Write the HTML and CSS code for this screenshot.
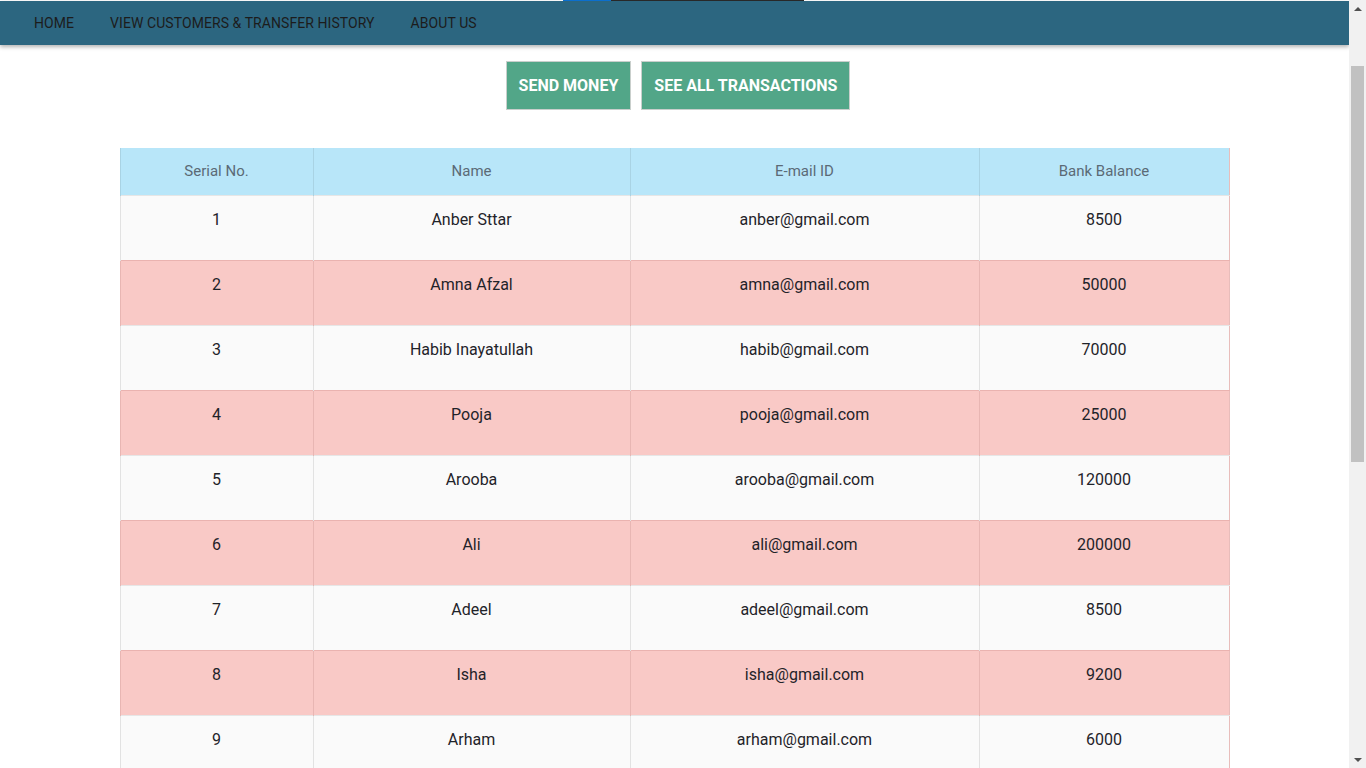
FILE: index.html
```html
<!DOCTYPE html>
<html lang="en">
<head>
<meta charset="utf-8">
<title>Customers</title>
<link rel="stylesheet" href="styles.css">
</head>
<body>
<div class="page">
<header class="top">
  <div class="top-bar"><span class="seg-blue"></span><span class="seg-dark"></span></div>
</header>
<nav class="nav">
  <a class="nav-link" href="#">HOME</a>
  <a class="nav-link" href="#">VIEW CUSTOMERS &amp; TRANSFER HISTORY</a>
  <a class="nav-link" href="#">ABOUT US</a>
</nav>
<main class="main">
  <div class="actions">
    <button class="btn">SEND MONEY</button>
    <button class="btn">SEE ALL TRANSACTIONS</button>
  </div>
  <div class="container">
    <table class="customers">
      <thead>
        <tr><th class="c1">Serial No.</th><th class="c2">Name</th><th class="c3">E-mail ID</th><th class="c4">Bank Balance</th></tr>
      </thead>
      <tbody>
        <tr><td>1</td><td>Anber Sttar</td><td>anber@gmail.com</td><td>8500</td></tr>
        <tr><td>2</td><td>Amna Afzal</td><td>amna@gmail.com</td><td>50000</td></tr>
        <tr><td>3</td><td>Habib Inayatullah</td><td>habib@gmail.com</td><td>70000</td></tr>
        <tr><td>4</td><td>Pooja</td><td>pooja@gmail.com</td><td>25000</td></tr>
        <tr><td>5</td><td>Arooba</td><td>arooba@gmail.com</td><td>120000</td></tr>
        <tr><td>6</td><td>Ali</td><td>ali@gmail.com</td><td>200000</td></tr>
        <tr><td>7</td><td>Adeel</td><td>adeel@gmail.com</td><td>8500</td></tr>
        <tr><td>8</td><td>Isha</td><td>isha@gmail.com</td><td>9200</td></tr>
        <tr><td>9</td><td>Arham</td><td>arham@gmail.com</td><td>6000</td></tr>
        <tr><td>10</td><td>Sara</td><td>sara@gmail.com</td><td>15000</td></tr>
        <tr><td>11</td><td>Hamza</td><td>hamza@gmail.com</td><td>30000</td></tr>
        <tr><td>12</td><td>Fatima</td><td>fatima@gmail.com</td><td>45000</td></tr>
        <tr><td>13</td><td>Usman</td><td>usman@gmail.com</td><td>18000</td></tr>
        <tr><td>14</td><td>Zara</td><td>zara@gmail.com</td><td>22000</td></tr>
        <tr><td>15</td><td>Bilal</td><td>bilal@gmail.com</td><td>11000</td></tr>
      </tbody>
    </table>
  </div>
</main>
</div>
<div class="scrollbar" aria-hidden="true">
  <span class="sb-arrow sb-up"></span>
  <div class="sb-track"><span class="sb-thumb"></span></div>
  <span class="sb-arrow sb-down"></span>
</div>
<script src="script.js"></script>
</body>
</html>
```
FILE: styles.css
```css
html, body {
  margin: 0;
  padding: 0;
}
body {
  font-family: Roboto, "Liberation Sans", Arial, sans-serif;
  background: #ffffff;
  color: #212529;
}
.page {
  margin-right: 17px;
}
.top {
  height: 96px;
  display: flex;
  align-items: flex-end;
  justify-content: center;
  background: #ffffff;
}
.top-bar {
  display: flex;
  height: 1px;
  margin-left: 18px;
}
.seg-blue {
  width: 48px;
  background: #0d74d6;
}
.seg-dark {
  width: 193px;
  background: #2a2a2a;
}
.nav {
  height: 44px;
  background: #2c6680;
  display: flex;
  align-items: center;
  padding-left: 16px;
  box-shadow: 0 2px 4px rgba(0, 0, 0, 0.3);
  position: relative;
}
.nav-link {
  padding: 1px 18px 0;
  font-size: 14px;
  letter-spacing: 0.07px;
  color: #1c1c1c;
  text-decoration: none;
  line-height: 43px;
}
.main {
  padding-bottom: 158px;
}
.actions {
  display: flex;
  justify-content: center;
  gap: 10px;
  padding-top: 16px;
  padding-left: 7px;
  margin-bottom: 38px;
}
.btn {
  height: 49px;
  padding: 0 12px;
  background: #52a688;
  border: 1px solid #c9cfcc;
  color: #ffffff;
  font-family: Roboto, "Liberation Sans", Arial, sans-serif;
  font-weight: 700;
  font-size: 16px;
}
.container {
  max-width: 1110px;
  margin: 0 auto;
}
.customers {
  width: 100%;
  border-collapse: collapse;
  table-layout: fixed;
  border-right: 1px solid #e8bdbb;
}
.customers th {
  height: 46px;
  background: #b8e6f9;
  color: #5b6a76;
  font-weight: 400;
  font-size: 15px;
  border-left: 1px solid #a9d3e4;
  text-align: center;
  vertical-align: middle;
  padding: 0 0 1px;
}
.customers th.c1 { width: 192px; }
.customers th.c2 { width: 316px; }
.customers th.c3 { width: 348px; }
.customers th.c4 { width: auto; }
.customers td {
  height: 65px;
  box-sizing: border-box;
  padding: 13px 0 0;
  vertical-align: top;
  text-align: center;
  font-size: 16px;
  font-weight: 400;
  color: #1f2329;
  border-left: 1px solid #e2e2e2;
  line-height: 22px;
}
.customers tbody tr {
  background: #fafafa;
  border-top: 1px solid #e6e6e6;
}
.customers tbody tr:nth-child(even) {
  background: #f9c9c6;
  border-top: 1px solid #eab3b0;
}
.customers tbody tr:nth-child(even) td {
  border-left-color: #e8b6b3;
}
.scrollbar {
  position: fixed;
  top: 0;
  right: 0;
  width: 17px;
  height: 100vh;
  background: #f1f1f1;
  display: flex;
  flex-direction: column;
  z-index: 10;
}
.sb-arrow {
  height: 17px;
  display: flex;
  align-items: center;
  justify-content: center;
}
.sb-up::before {
  content: "";
  border-left: 4px solid transparent;
  border-right: 4px solid transparent;
  border-bottom: 4px solid #505050;
}
.sb-down::before {
  content: "";
  border-left: 4px solid transparent;
  border-right: 4px solid transparent;
  border-top: 4px solid #505050;
}
.sb-track {
  flex: 1;
  padding: 49px 2px 0;
}
.sb-thumb {
  display: block;
  height: 396px;
  background: #c1c1c1;
}
```
FILE: script.js
```js
window.scrollTo(0, 95);
window.addEventListener('load', function () { window.scrollTo(0, 95); });
```
